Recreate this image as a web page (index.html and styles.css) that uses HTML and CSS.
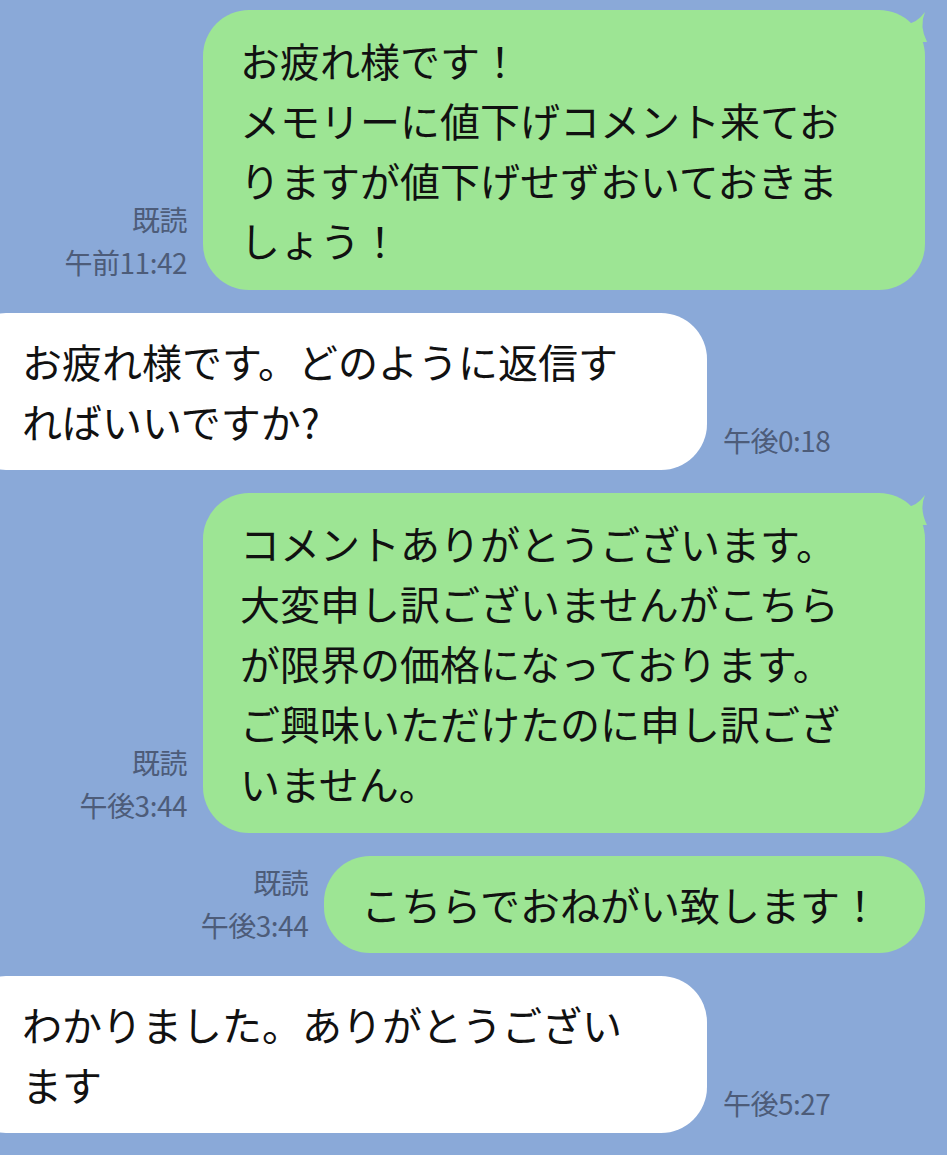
FILE: index.html
```html
<!DOCTYPE html>
<html lang="ja">

<head>
    <meta charset="UTF-8">
    <meta name="viewport" content="width=device-width, initial-scale=1.0">
    <title>トーク</title>
    <link rel="stylesheet" href="styles.css">
</head>

<body>
    <div class="chat">
        <!-- sent -->
        <div class="row row-sent">
            <div class="meta">
                <span>既読</span>
                <span>午前11:42</span>
            </div>
            <div class="bubble bubble-sent bubble-wide has-tail">
                お疲れ様です！<br>
                メモリーに値下げコメント来てお<br>
                りますが値下げせずおいておきま<br>
                しょう！
            </div>
        </div>

        <!-- received -->
        <div class="row row-recv">
            <div class="bubble bubble-recv has-tail">
                お疲れ様です。どのように返信す<br>
                ればいいですか?
            </div>
            <div class="meta">
                <span>午後0:18</span>
            </div>
        </div>

        <div class="row row-sent">
            <div class="meta">
                <span>既読</span>
                <span>午後3:44</span>
            </div>
            <div class="bubble bubble-sent bubble-wide has-tail">
                コメントありがとうございます。<br>
                大変申し訳ございませんがこちら<br>
                が限界の価格になっております。<br>
                ご興味いただけたのに申し訳ござ<br>
                いません。
            </div>
        </div>

        <div class="row row-sent row-follow">
            <div class="meta">
                <span>既読</span>
                <span>午後3:44</span>
            </div>
            <div class="bubble bubble-sent">
                こちらでおねがい致します！
            </div>
        </div>

        <div class="row row-recv">
            <div class="bubble bubble-recv has-tail">
                わかりました。ありがとうござい<br>
                ます
            </div>
            <div class="meta">
                <span>午後5:27</span>
            </div>
        </div>
    </div>
</body>

</html>
```

FILE: styles.css
```css
html,
body {
    margin: 0;
    padding: 0;
}

body {
    background-color: #8aa9d8;
    font-family: "Noto Sans CJK JP", "Noto Sans", sans-serif;
    overflow: hidden;
}

.chat {
    width: 947px;
    height: 1155px;
    padding-top: 10px;
    box-sizing: border-box;
    display: flex;
    flex-direction: column;
    gap: 23px;
}

.row {
    display: flex;
    align-items: flex-end;
    gap: 16px;
}

.row-sent {
    justify-content: flex-end;
    padding-right: 22px;
}

.row-recv {
    justify-content: flex-start;
}

.meta {
    display: flex;
    flex-direction: column;
    font-size: 28px;
    line-height: 43px;
    letter-spacing: -0.5px;
    color: #4d5c79;
    padding-bottom: 6px;
}

.row-sent .meta {
    align-items: flex-end;
}

.bubble {
    position: relative;
    font-size: 40px;
    line-height: 60px;
    color: #111;
    white-space: nowrap;
    border-radius: 46px;
    padding: 18px 45px 19px 37px;
}

.bubble-sent {
    background-color: #9de594;
}

.bubble-wide {
    width: 722px;
    box-sizing: border-box;
    padding-top: 20px;
    padding-bottom: 20px;
}

.bubble-recv {
    background-color: #fff;
    width: 747px;
    box-sizing: border-box;
    margin-left: -40px;
    padding-left: 62px;
}

/* little speech tails */
.bubble-sent.has-tail::after {
    content: "";
    position: absolute;
    top: 2px;
    right: -2px;
    width: 26px;
    height: 30px;
    background-color: #9de594;
    clip-path: path("M0 12 Q14 14 24 0 Q18 14 26 30 L0 30 Z");
}

.bubble-recv.has-tail::before {
    content: "";
    position: absolute;
    top: 0;
    left: 34px;
    width: 26px;
    height: 30px;
    background-color: #fff;
    clip-path: path("M26 12 Q12 14 2 0 Q8 14 0 30 L26 30 Z");
}

.row-recv .meta {
    padding-bottom: 8px;
}
```
